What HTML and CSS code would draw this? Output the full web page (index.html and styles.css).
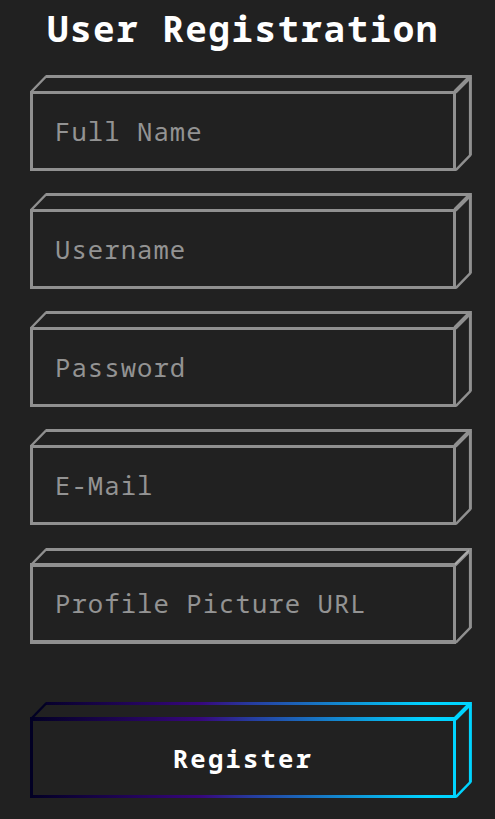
FILE: index.html
```html
<!DOCTYPE html>
<html lang="en">
<head>
<meta charset="utf-8">
<title>User Registration</title>
<link rel="stylesheet" href="styles.css">
</head>
<body>
<svg class="defs" width="0" height="0" aria-hidden="true">
  <defs>
    <linearGradient id="glow" gradientUnits="userSpaceOnUse" x1="0" y1="0" x2="426" y2="0">
      <stop offset="0" stop-color="#020024"/>
      <stop offset=".4" stop-color="#37077c"/>
      <stop offset=".52" stop-color="#263c9f"/>
      <stop offset=".93" stop-color="#00d4ff"/>
      <stop offset="1" stop-color="#00d4ff"/>
    </linearGradient>
    <g id="box">
      <path d="M1.5 17.5H424.5V94.5H1.5Z" stroke-width="3"/>
      <path d="M15.5 1.5H440" stroke-width="3"/>
      <path d="M1 17L16 1.5M425.8 95.2L440.6 79.8" stroke-width="2.4"/>
      <path d="M425 17L440.5 1.5" stroke-width="4"/>
      <path d="M440.4 0V80.4" stroke-width="3"/>
    </g>
    <g id="box-heavy">
      <path d="M1.5 17V94.5M424.5 17V94.5M15.5 1.5H440" stroke-width="3"/>
      <path d="M0 17H426M0 94H426" stroke-width="4"/>
      <path d="M1 17L16 1.5M425.8 94.7L440.6 79.3" stroke-width="2.4"/>
      <path d="M425 17L440.5 1.5" stroke-width="3.6"/>
      <path d="M425 16.5L441 .5" class="edge" stroke-width="1.6"/>
      <path d="M440.4 0V80" stroke-width="3"/>
    </g>
  </defs>
</svg>
<form class="form">
  <h1 class="title">User Registration</h1>
  <div class="field"><svg class="frame"><use href="#box"/></svg><input class="input" type="text" placeholder="Full Name"></div>
  <div class="field"><svg class="frame"><use href="#box"/></svg><input class="input" type="text" placeholder="Username"></div>
  <div class="field"><svg class="frame"><use href="#box"/></svg><input class="input" type="password" placeholder="Password"></div>
  <div class="field"><svg class="frame"><use href="#box"/></svg><input class="input" type="text" placeholder="E-Mail"></div>
  <div class="field field-last"><svg class="frame"><use href="#box-heavy"/></svg><input class="input" type="text" placeholder="Profile Picture URL"></div>
  <div class="field action">
    <svg class="frame frame-glow">
      <path d="M0 17H426" stroke-width="4"/>
      <path d="M0 94.5H426M15.5 1.5H440" stroke-width="3"/>
      <path d="M1.5 15V95" class="dark" stroke-width="3"/>
      <path d="M1 17L16 1.5" class="dark" stroke-width="2.4"/>
      <path d="M424.5 15V96" class="cyan" stroke-width="3"/>
      <path d="M425 17L440.5 1.5" class="cyan" stroke-width="4"/>
      <path d="M425.8 95.2L440.6 79.8" class="cyan" stroke-width="2.4"/>
      <path d="M440.4 0V80.4" class="cyan" stroke-width="3"/>
    </svg>
    <button class="button" type="button">Register</button>
  </div>
</form>
</body>
</html>
```

FILE: styles.css
```css
* { box-sizing: border-box; }
body {
  margin: 0;
  height: 819px;
  overflow: hidden;
  background: #212121;
  font-family: "Noto Sans Mono", "DejaVu Sans Mono", monospace;
}
.defs { position: absolute; }
.form { padding: 0 23px 0 30px; }
.title {
  margin: 0;
  height: 75px;
  padding-top: 4px;
  text-indent: 17px;
  font-size: 36px;
  line-height: 50px;
  letter-spacing: 1.45px;
  white-space: nowrap;
  color: #fff;
}
.field {
  position: relative;
  height: 96px;
  margin-bottom: 22px;
  padding-top: 16px;
}
.field-last { margin: 23px 0 58px; }
.frame {
  position: absolute;
  left: 0;
  top: 0;
  width: 442px;
  height: 97px;
  fill: none;
  stroke: #909090;
}
.frame-glow { stroke: url(#glow); }
.edge { stroke: #b0b0b0; }
.dark { stroke: #020024; }
.cyan { stroke: #00d4ff; }
.input, .button {
  position: relative;
  display: block;
  width: 426px;
  height: 80px;
  margin: 0;
  border: 0;
  background: none;
  font-family: inherit;
  font-size: 25.6px;
  outline: 0;
}
.input { padding: 0 20px 0 25px; letter-spacing: 1.05px; color: #fff; }
.field-last .input { padding-bottom: 2px; }
.input::placeholder { color: #939393; opacity: 1; }
.button { padding: 0; font-weight: 700; letter-spacing: 2.2px; color: #fff; }
```
